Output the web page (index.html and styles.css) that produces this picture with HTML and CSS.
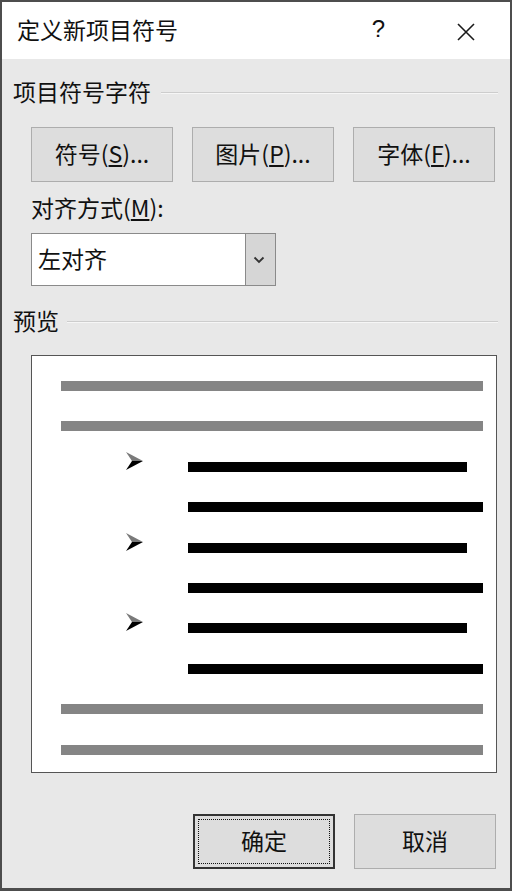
FILE: index.html
```html
<!DOCTYPE html>
<html lang="zh-CN">
  <head>
    <meta charset="UTF-8" />
    <meta name="viewport" content="width=device-width, initial-scale=1.0" />
    <title>定义新项目符号</title>

    <link rel="stylesheet" href="styles.css">
  </head>

  <body>
    <div class="dialog">
      <div class="title-bar">
        <span class="title">定义新项目符号</span>
        <span class="help">?</span>
        <svg class="close" width="18" height="18" viewBox="0 0 18 18">
          <path d="M1 1 L17 17 M17 1 L1 17" stroke="#1a1a1a" stroke-width="1.6" fill="none" />
        </svg>
      </div>

      <div class="content">
        <div class="group-header">
          <span>项目符号字符</span>
          <div class="rule"></div>
        </div>

        <div class="indent">
          <div class="button-row">
            <button class="btn">符号(<u>S</u>)...</button>
            <button class="btn">图片(<u>P</u>)...</button>
            <button class="btn">字体(<u>F</u>)...</button>
          </div>

          <div class="field-label">对齐方式(<u>M</u>):</div>
          <div class="select">
            <span class="select-value">左对齐</span>
            <span class="select-arrow">
              <svg width="12" height="8" viewBox="0 0 12 8">
                <path d="M1.5 1.5 L6 6 L10.5 1.5" stroke="#333" stroke-width="1.8" fill="none" />
              </svg>
            </span>
          </div>
        </div>

        <div class="group-header preview-header">
          <span>预览</span>
          <div class="rule"></div>
        </div>

        <div class="indent">
          <div class="preview">
            <div class="row"><div class="bar gray"></div></div>
            <div class="row"><div class="bar gray"></div></div>

            <div class="row">
              <svg class="bullet" width="17" height="18" viewBox="0 0 17 18">
                <polygon points="0,0 17,9 6,9" fill="#7a7a7a" />
                <polygon points="6,9 17,9 0,18" fill="#000" />
              </svg>
              <div class="bar black short"></div>
            </div>
            <div class="row"><div class="bar black indented"></div></div>

            <div class="row">
              <svg class="bullet" width="17" height="18" viewBox="0 0 17 18">
                <polygon points="0,0 17,9 6,9" fill="#7a7a7a" />
                <polygon points="6,9 17,9 0,18" fill="#000" />
              </svg>
              <div class="bar black short"></div>
            </div>
            <div class="row"><div class="bar black indented"></div></div>

            <div class="row">
              <svg class="bullet" width="17" height="18" viewBox="0 0 17 18">
                <polygon points="0,0 17,9 6,9" fill="#7a7a7a" />
                <polygon points="6,9 17,9 0,18" fill="#000" />
              </svg>
              <div class="bar black short"></div>
            </div>
            <div class="row"><div class="bar black indented"></div></div>

            <div class="row"><div class="bar gray"></div></div>
            <div class="row"><div class="bar gray"></div></div>
          </div>
        </div>

        <div class="footer">
          <button class="btn default">确定</button>
          <button class="btn">取消</button>
        </div>
      </div>
    </div>
  </body>
</html>
```

FILE: styles.css
```css
body {
  margin: 0;
  font-family: "Noto Sans CJK SC", "Noto Sans", sans-serif;
  color: #111111;
  background-color: #4d4d4d;
}

.dialog {
  width: 512px;
  height: 891px;
  box-sizing: border-box;
  border: 2px solid #4d4d4d;
  border-bottom-width: 3px;
  background-color: #e8e8e8;
  display: flex;
  flex-direction: column;
}

.title-bar {
  height: 57px;
  background-color: #ffffff;
  display: flex;
  align-items: center;
  padding-left: 15px;
  font-size: 23px;
}

.title {
  line-height: 24px;
  margin-top: -4px;
}

.help {
  margin-left: auto;
  font-family: "Liberation Sans", sans-serif;
  font-size: 24px;
  line-height: 24px;
  margin-top: -4px;
}

.close {
  margin-left: 72px;
  margin-right: 35px;
  margin-top: 2px;
}

.content {
  padding: 22px 12px 0 11px;
  font-size: 23px;
  line-height: 24px;
}

.group-header {
  display: flex;
  align-items: center;
  gap: 10px;
}

/* glyphs sit low in the line box, lift them a little */
.group-header span {
  margin-top: -2px;
  margin-bottom: 2px;
}

.rule {
  flex: 1;
  height: 0;
  border-top: 1px solid #cdcdcd;
  border-bottom: 1px solid #f6f6f6;
}

.indent {
  margin-left: 18px;
}

.button-row {
  display: flex;
  gap: 19px;
  margin-top: 22px;
}

.btn {
  width: 142px;
  height: 55px;
  box-sizing: border-box;
  background-color: #dddddd;
  border: 1px solid #adadad;
  font-family: inherit;
  font-size: 23px;
  line-height: 24px;
  color: #111111;
  padding: 0 0 3px;
}

.btn u {
  text-underline-offset: 2px;
}

.field-label {
  margin-top: 13px;
}

.select {
  margin-top: 14px;
  width: 245px;
  height: 53px;
  box-sizing: border-box;
  border: 1px solid #8a8a8a;
  background-color: #ffffff;
  display: flex;
}

.select-value {
  flex: 1;
  padding-left: 6px;
  padding-bottom: 4px;
  align-self: center;
}

.select-arrow {
  width: 31px;
  background-color: #d6d6d6;
  border: 1px solid #8a8a8a;
  display: flex;
  align-items: center;
  justify-content: center;
  padding-right: 4px;
  box-sizing: border-box;
  margin: -1px -1px -1px 0;
}

.preview-header {
  margin-top: 24px;
  gap: 8px;
}

.preview {
  margin-top: 21px;
  width: 466px;
  height: 418px;
  box-sizing: border-box;
  border: 1px solid #555555;
  background-color: #ffffff;
  padding: 25px 13px 0 29px;
  display: flex;
  flex-direction: column;
  gap: 30.4px;
}

.row {
  height: 10px;
  display: flex;
}

.bar {
  flex: 1;
  height: 10px;
}

.gray {
  background-color: #858585;
}

.black {
  background-color: #000000;
}

.bullet {
  flex: none;
  margin-left: 65px;
  margin-top: -10px;
}

.short {
  margin-left: 45px;
  margin-right: 16px;
}

.indented {
  margin-left: 127px;
}

.footer {
  margin-top: 41px;
  display: flex;
  justify-content: flex-end;
  gap: 19px;
  padding-right: 2px;
}

.default {
  border: 2px solid #333333;
  outline: 1px dotted #111111;
  outline-offset: -6px;
}
```
